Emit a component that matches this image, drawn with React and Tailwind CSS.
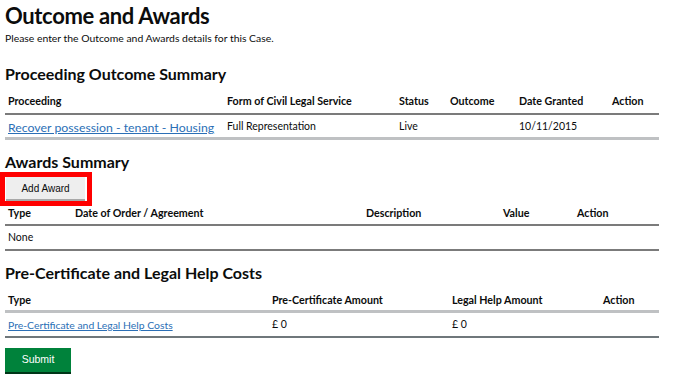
import React from 'react';

const font = { fontFamily: 'Lato, "Noto Sans", Arial, sans-serif' };
const btnFont = { fontFamily: '"Liberation Sans", Arial, sans-serif' };

const Th = ({ children, className = '' }) => (
  <th className={`text-left font-bold text-[10.7px] leading-[14px] text-[#0b0c0c] px-[3px] pt-0 ${className}`}>{children}</th>
);

const Td = ({ children, className = '' }) => (
  <td className={`text-left text-[10.5px] leading-[14px] text-[#0b0c0c] px-[3px] align-middle ${className}`}>{children}</td>
);

export default function App() {
  return (
    <div className="bg-white w-[679px] h-[379px] overflow-hidden px-[5px] pt-[1px]" style={font}>
      {/* Page heading */}
      <h1 className="text-[22px] font-bold leading-[30px] tracking-[-0.35px] text-[#0b0c0c]">Outcome and Awards</h1>
      <p className="text-[10.4px] leading-[14px] text-[#0b0c0c]">Please enter the Outcome and Awards details for this Case.</p>

      {/* Proceeding Outcome Summary */}
      <h2 className="text-[16px] font-bold leading-[22px] mt-[18px] text-[#0b0c0c]">Proceeding Outcome Summary</h2>
      <table className="w-[654px] mt-[9px] border-collapse table-fixed">
        <thead>
          <tr className="border-b-2 border-[#7b7b7b]">
            <Th className="w-[219px] pb-[5px]">Proceeding</Th>
            <Th className="w-[172px] pb-[5px]">Form of Civil Legal Service</Th>
            <Th className="w-[51px] pb-[5px]">Status</Th>
            <Th className="w-[69px] pb-[5px]">Outcome</Th>
            <Th className="w-[93px] pb-[5px]">Date Granted</Th>
            <Th className="pb-[5px]">Action</Th>
          </tr>
        </thead>
        <tbody>
          <tr className="border-b-[3px] border-[#bfc1c3]">
            <td className="px-[3px] pt-[3px] pb-[1px] leading-[16px]">
              <a href="#" className="text-[12.3px] text-[#2b6fb6] underline whitespace-nowrap">Recover possession - tenant - Housing</a>
            </td>
            <Td>Full Representation</Td>
            <Td>Live</Td>
            <Td></Td>
            <Td>10/11/2015</Td>
            <Td></Td>
          </tr>
        </tbody>
      </table>

      {/* Awards Summary */}
      <h2 className="text-[16px] font-bold leading-[22px] mt-[11px] text-[#0b0c0c]">Awards Summary</h2>
      <div className="-ml-[5px] -mt-[1px] w-fit border-[5px] border-[#ff0000] pl-[1px] pr-[2px] pb-[2px]">
        <button
          className="block bg-[#eeeeee] text-[#0b0c0c] text-[10px] h-[22px] w-[79px] whitespace-nowrap shadow-[0_2px_0_#a8a8a8]"
          style={btnFont}
        >
          Add Award
        </button>
      </div>
      <table className="w-[654px] border-collapse table-fixed">
        <thead>
          <tr className="border-b-2 border-[#7b7b7b]">
            <Th className="w-[67px] pb-[4px]">Type</Th>
            <Th className="w-[291px] pb-[4px]">Date of Order / Agreement</Th>
            <Th className="w-[137px] pb-[4px]">Description</Th>
            <Th className="w-[74px] pb-[4px]">Value</Th>
            <Th className="pb-[4px]">Action</Th>
          </tr>
        </thead>
        <tbody>
          <tr className="border-b-2 border-[#7b7b7b]">
            <Td className="pt-[4px] pb-[5px]">None</Td>
            <Td></Td>
            <Td></Td>
            <Td></Td>
            <Td></Td>
          </tr>
        </tbody>
      </table>

      {/* Pre-Certificate and Legal Help Costs */}
      <h2 className="text-[16px] font-bold leading-[22px] mt-[11px] text-[#0b0c0c]">Pre-Certificate and Legal Help Costs</h2>
      <table className="w-[654px] mt-[9px] border-collapse table-fixed">
        <thead>
          <tr className="border-b-[3px] border-[#bfc1c3]">
            <Th className="w-[264px] pb-[3px]">Type</Th>
            <Th className="w-[180px] pb-[3px]">Pre-Certificate Amount</Th>
            <Th className="w-[151px] pb-[3px]">Legal Help Amount</Th>
            <Th className="pb-[3px]">Action</Th>
          </tr>
        </thead>
        <tbody>
          <tr className="border-b-2 border-[#6f777b]">
            <td className="px-[3px] pt-[3px] pb-[4px] leading-[14px]">
              <a href="#" className="text-[10.4px] text-[#2b6fb6] underline whitespace-nowrap">Pre-Certificate and Legal Help Costs</a>
            </td>
            <Td className="pt-[3px] pb-[4px]">£ 0</Td>
            <Td className="pt-[3px] pb-[4px]">£ 0</Td>
            <Td></Td>
          </tr>
        </tbody>
      </table>

      <button
        className="block mt-[10px] bg-[#00823b] text-white text-[10.5px] w-[66px] h-[24px] shadow-[0_2px_0_#003618]"
        style={btnFont}
      >
        Submit
      </button>
    </div>
  );
}
